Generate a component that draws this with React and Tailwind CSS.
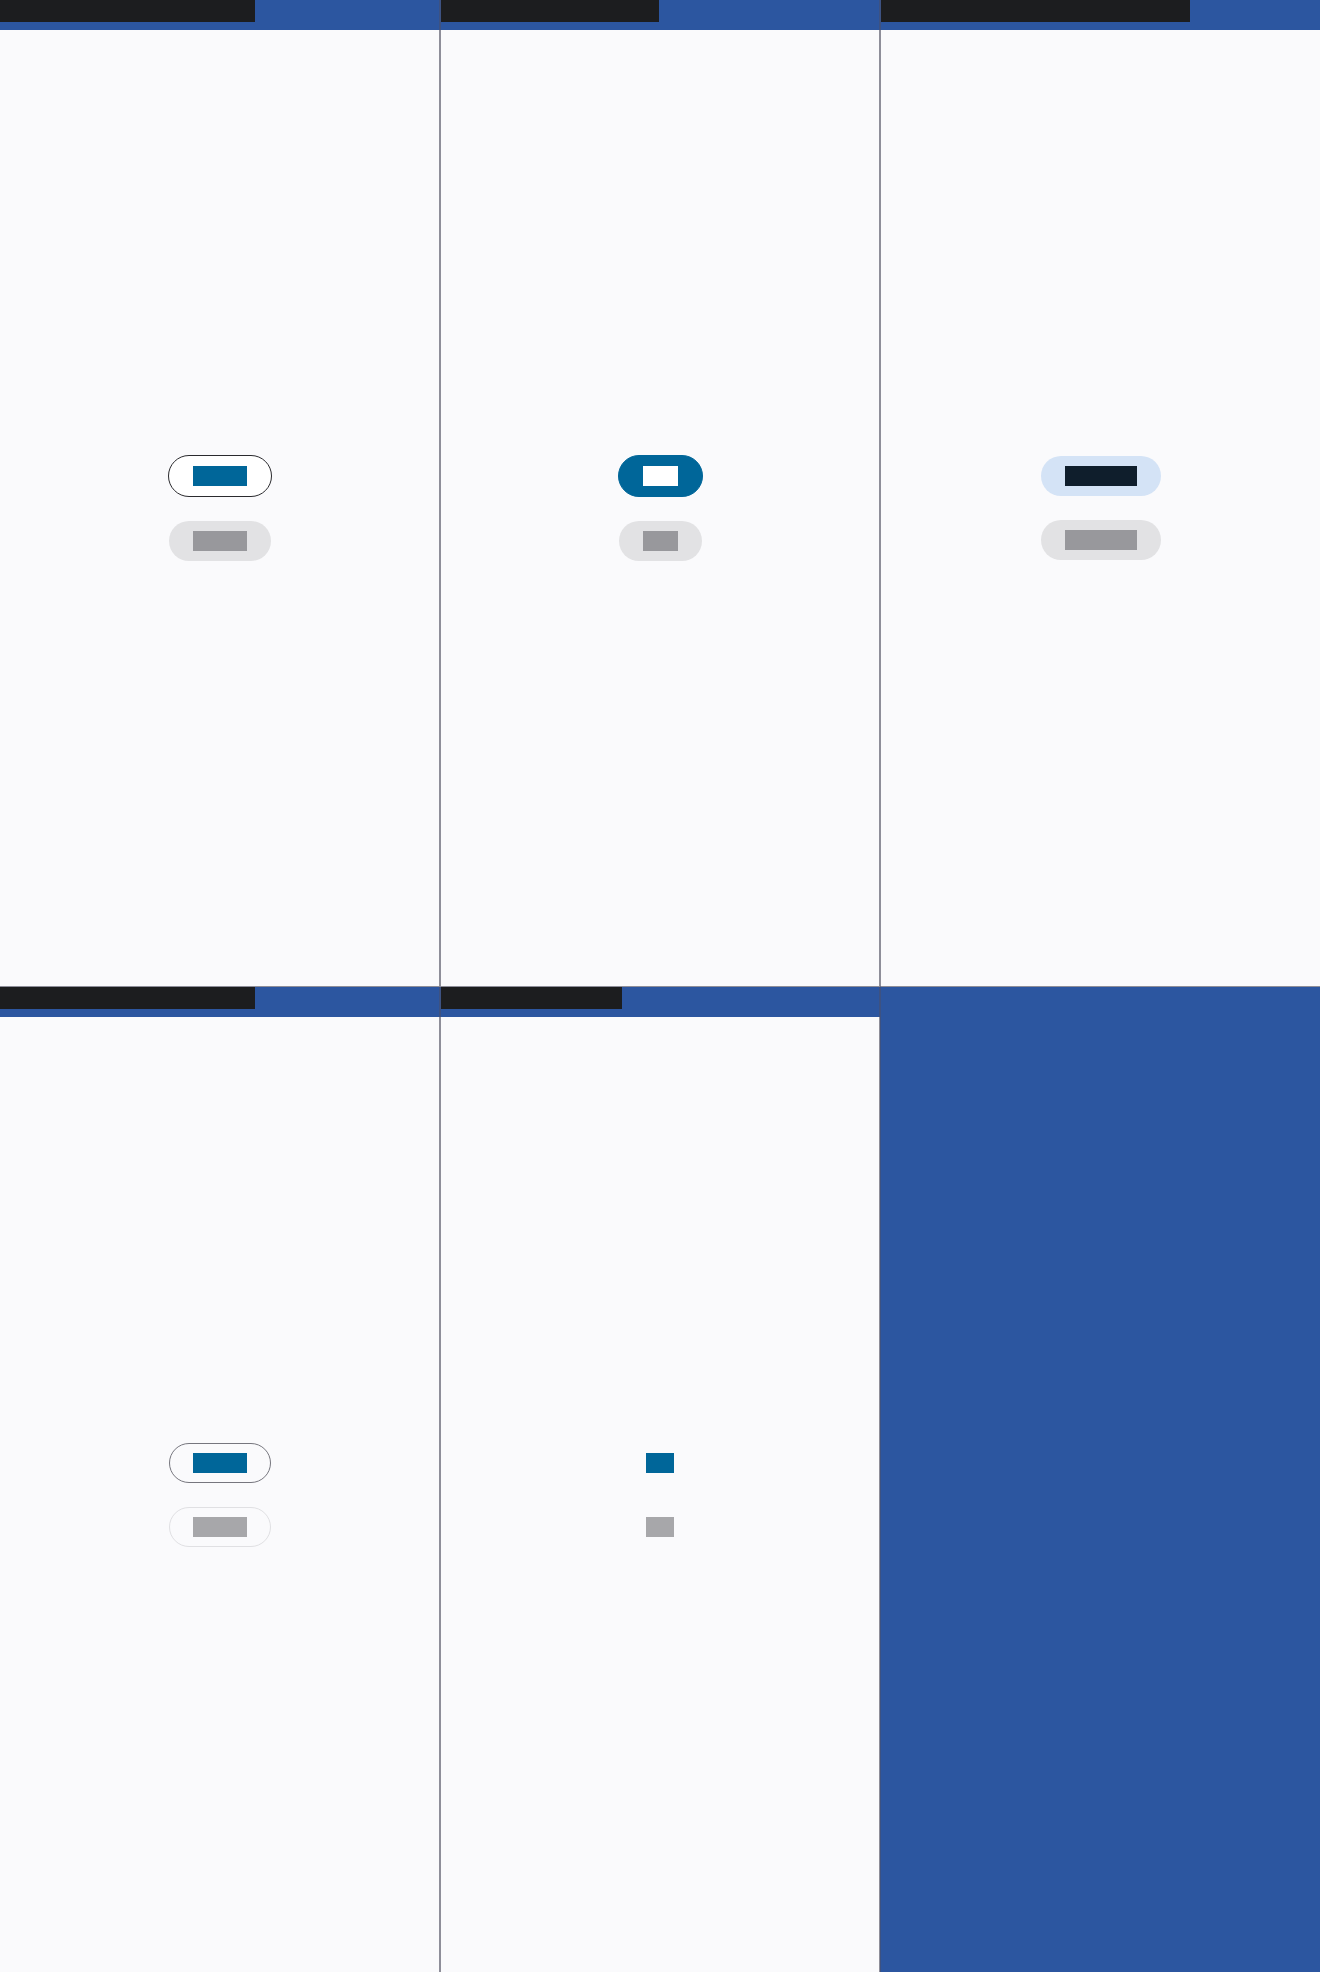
import React from "react";

const Text = ({ className }) => <span className={`block h-5 ${className}`} />;

const Header = ({ barWidth, border }) => (
  <div className={`h-[30px] shrink-0 bg-[#2c56a0] border-[#3d5282] ${border}`}>
    <div className="h-[22px] bg-[#1c1d1f]" style={{ width: barWidth }} />
  </div>
);

const Cell = ({ barWidth, border, children }) => (
  <div className="flex flex-col min-h-0">
    <Header barWidth={barWidth} border={border} />
    <div
      className={`flex-1 bg-[#fafafc] border-[#8e8e99] flex flex-col items-center justify-center gap-6 ${border}`}
    >
      {children}
    </div>
  </div>
);

const App = () => {
  return (
    <div className="w-[1320px] h-[1972px] bg-[#2c56a0] grid grid-cols-3 grid-rows-2 font-['Roboto',sans-serif]">
      {/* outlined */}
      <Cell barWidth={255} border="border-r border-b-0">
        <button className="box-content h-10 px-6 rounded-full border border-[#2a2a2e] bg-white flex items-center">
          <Text className="w-[54px] bg-[#006699]" />
        </button>
        <button className="h-10 px-6 rounded-full bg-[#e2e2e4] flex items-center">
          <Text className="w-[54px] bg-[#98989c]" />
        </button>
      </Cell>

      {/* filled */}
      <Cell barWidth={218} border="border-x">
        <button className="box-content h-10 px-6 rounded-full border border-[#006699] bg-[#006699] flex items-center">
          <Text className="w-[35px] bg-white" />
        </button>
        <button className="h-10 px-6 rounded-full bg-[#e2e2e4] flex items-center">
          <Text className="w-[35px] bg-[#98989c]" />
        </button>
      </Cell>

      {/* tonal */}
      <Cell barWidth={309} border="border-l">
        <button className="h-10 px-6 rounded-full bg-[#d4e3f6] flex items-center">
          <Text className="w-[72px] bg-[#0f1e2c]" />
        </button>
        <button className="h-10 px-6 rounded-full bg-[#e2e2e4] flex items-center">
          <Text className="w-[72px] bg-[#98989c]" />
        </button>
      </Cell>

      {/* outlined, light */}
      <div className="border-t border-[#8e8e99] flex flex-col min-h-0">
        <Header barWidth={255} border="border-r" />
        <div className="flex-1 bg-[#fafafc] border-r border-[#8e8e99] flex flex-col items-center justify-center gap-6">
          <button className="h-10 px-[23px] rounded-full border border-[#76767e] flex items-center">
            <Text className="w-[54px] bg-[#006699]" />
          </button>
          <button className="h-10 px-[23px] rounded-full border border-[#e0e0e3] flex items-center">
            <Text className="w-[54px] bg-[#a7a7aa]" />
          </button>
        </div>
      </div>

      {/* text */}
      <div className="border-t border-[#8e8e99] flex flex-col min-h-0">
        <Header barWidth={181} border="border-x" />
        <div className="flex-1 bg-[#fafafc] border-x border-[#8e8e99] flex flex-col items-center justify-center gap-6">
          <button className="h-10 flex items-center">
            <Text className="w-[28px] bg-[#006699]" />
          </button>
          <button className="h-10 flex items-center">
            <Text className="w-[28px] bg-[#a7a7aa]" />
          </button>
        </div>
      </div>

      <div className="border-t border-l border-t-[#8e8e99] border-l-[#3d5282]" />
    </div>
  );
};

export default App;
